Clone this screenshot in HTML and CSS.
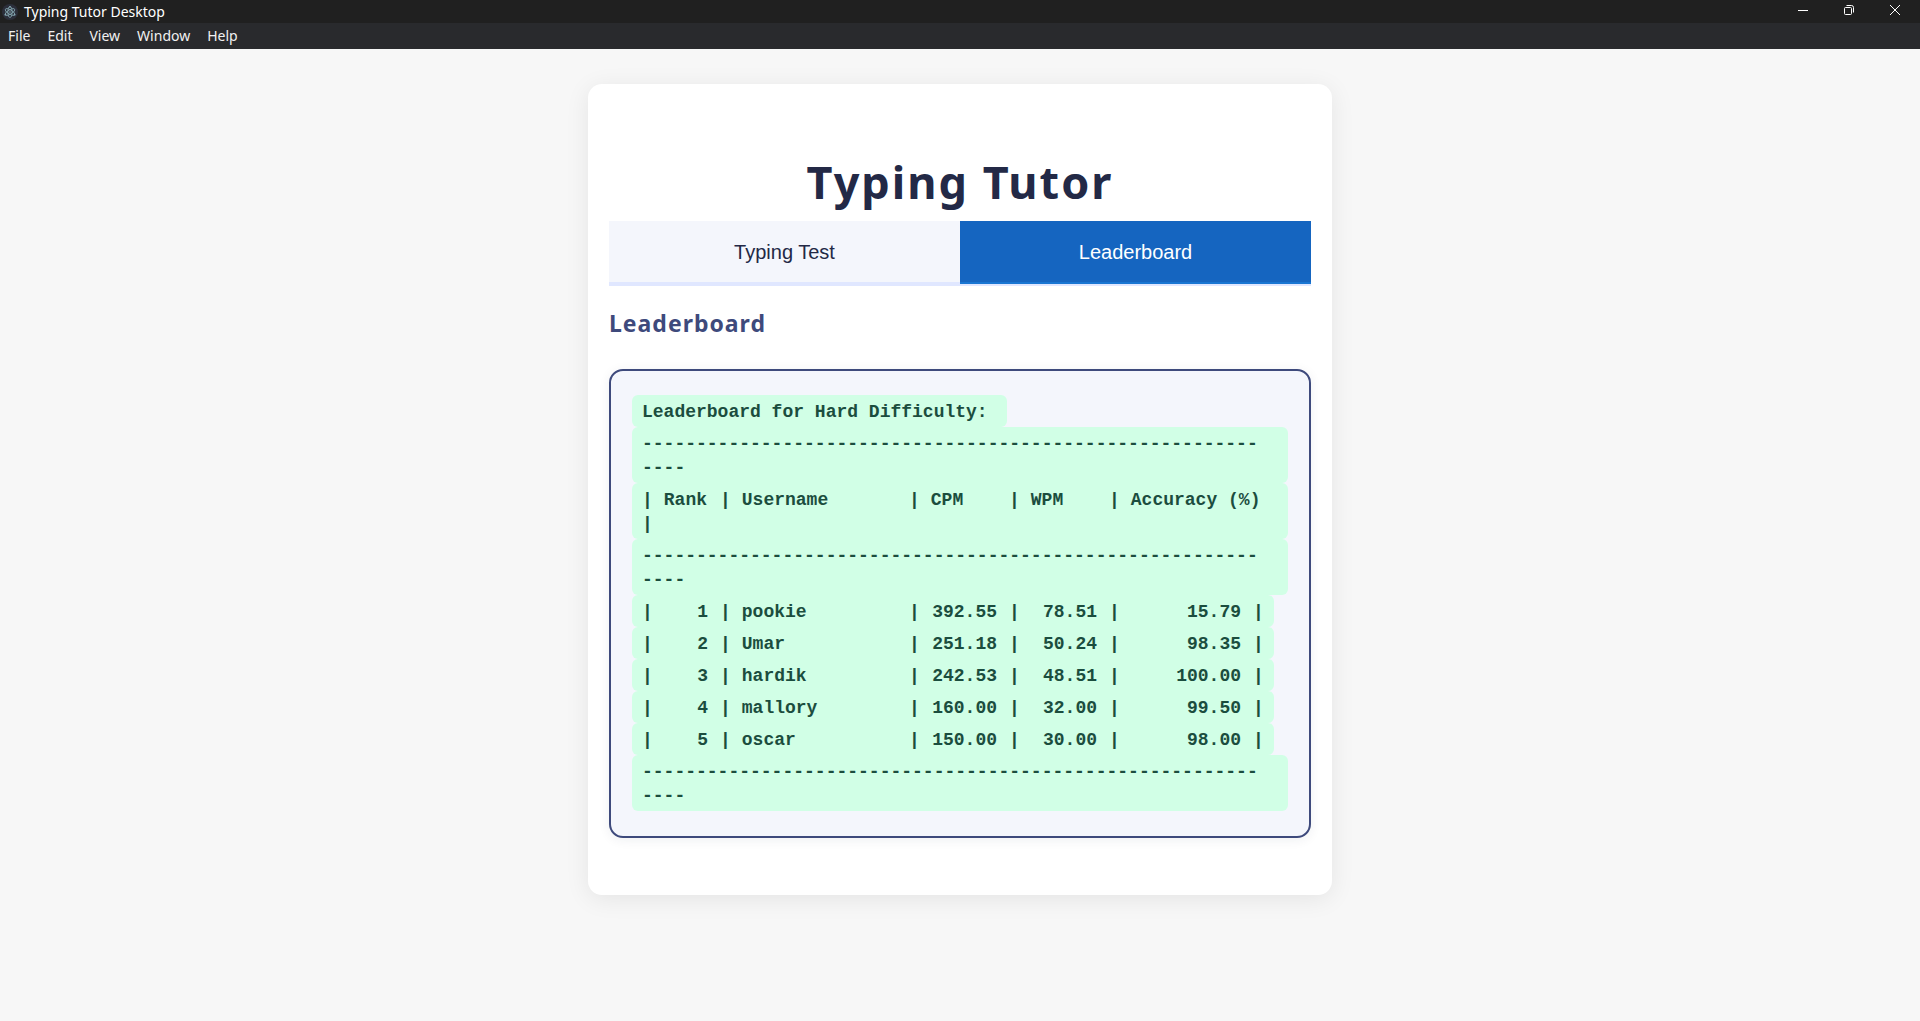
FILE: index.html
```html
<!DOCTYPE html>
<html lang="en">
<head>
<meta charset="utf-8">
<title>Typing Tutor Desktop</title>
<link rel="stylesheet" href="styles.css">
</head>
<body>
<header>
  <div class="titlebar">
    <svg class="app-icon" viewBox="0 0 16 16" aria-hidden="true">
      <circle cx="8" cy="8" r="8" fill="#2b2e3a"/>
      <g fill="none" stroke="#86a9b3" stroke-width="0.8">
        <ellipse cx="8" cy="8" rx="5.4" ry="2.1" transform="rotate(30 8 8)"/>
        <ellipse cx="8" cy="8" rx="5.4" ry="2.1" transform="rotate(90 8 8)"/>
        <ellipse cx="8" cy="8" rx="5.4" ry="2.1" transform="rotate(150 8 8)"/>
      </g>
      <g fill="#86a9b3">
        <circle cx="8" cy="8" r="0.8"/>
        <circle cx="3.4" cy="10.7" r="0.9"/>
        <circle cx="12.6" cy="10.7" r="0.9"/>
        <circle cx="8" cy="2.8" r="0.9"/>
      </g>
    </svg>
    <span class="app-title">Typing Tutor Desktop</span>
    <div class="window-controls">
      <button type="button" aria-label="Minimize"><svg viewBox="0 0 10 10"><path d="M0 5.5h10"/></svg></button>
      <button type="button" aria-label="Restore"><svg viewBox="0 0 10 10"><rect x="0.5" y="2.5" width="7" height="7" rx="1"/><path d="M2.5 .5H7.500a2 2 0 0 1 2 2V7.500"/></svg></button>
      <button type="button" aria-label="Close"><svg viewBox="0 0 10 10"><path d="M0 0l10 10M10 0L0 10"/></svg></button>
    </div>
  </div>
  <nav class="menubar" aria-label="Application menu">
    <button type="button">File</button>
    <button type="button">Edit</button>
    <button type="button">View</button>
    <button type="button">Window</button>
    <button type="button">Help</button>
  </nav>
</header>
<main class="card">
  <h1>Typing Tutor</h1>
  <div class="tabs" role="tablist">
    <button type="button" class="tab" role="tab" aria-selected="false">Typing Test</button>
    <button type="button" class="tab active" role="tab" aria-selected="true">Leaderboard</button>
  </div>
  <h2>Leaderboard</h2>
  <section class="panel">
    <table class="board">
      <caption>Leaderboard for Hard Difficulty:</caption>
      <thead>
        <tr class="rule"><td colspan="6">-------------------------------------------------------------</td></tr>
        <tr class="head">
          <th><i>|</i><span>Rank</span></th>
          <th><i>|</i><span>Username</span></th>
          <th><i>|</i><span>CPM</span></th>
          <th><i>|</i><span>WPM</span></th>
          <th><i>|</i><span>Accuracy (%)</span></th>
          <th><i>|</i></th>
        </tr>
        <tr class="rule"><td colspan="6">-------------------------------------------------------------</td></tr>
      </thead>
      <tbody>
        <tr class="entry"><td class="num"><i>|</i><span>1</span></td><td><i>|</i><span>pookie</span></td><td class="num"><i>|</i><span>392.55</span></td><td class="num"><i>|</i><span>78.51</span></td><td class="num"><i>|</i><span>15.79</span></td><td><i>|</i></td></tr>
        <tr class="entry"><td class="num"><i>|</i><span>2</span></td><td><i>|</i><span>Umar</span></td><td class="num"><i>|</i><span>251.18</span></td><td class="num"><i>|</i><span>50.24</span></td><td class="num"><i>|</i><span>98.35</span></td><td><i>|</i></td></tr>
        <tr class="entry"><td class="num"><i>|</i><span>3</span></td><td><i>|</i><span>hardik</span></td><td class="num"><i>|</i><span>242.53</span></td><td class="num"><i>|</i><span>48.51</span></td><td class="num"><i>|</i><span>100.00</span></td><td><i>|</i></td></tr>
        <tr class="entry"><td class="num"><i>|</i><span>4</span></td><td><i>|</i><span>mallory</span></td><td class="num"><i>|</i><span>160.00</span></td><td class="num"><i>|</i><span>32.00</span></td><td class="num"><i>|</i><span>99.50</span></td><td><i>|</i></td></tr>
        <tr class="entry"><td class="num"><i>|</i><span>5</span></td><td><i>|</i><span>oscar</span></td><td class="num"><i>|</i><span>150.00</span></td><td class="num"><i>|</i><span>30.00</span></td><td class="num"><i>|</i><span>98.00</span></td><td><i>|</i></td></tr>
        <tr class="rule"><td colspan="6">-------------------------------------------------------------</td></tr>
      </tbody>
    </table>
  </section>
</main>
</body>
</html>
```
FILE: styles.css
```css
* { box-sizing: border-box; }

body {
  margin: 0;
  background: #f7f7f7;
  font-family: "Noto Sans", "Open Sans", sans-serif;
  color: #232946;
}

button {
  margin: 0;
  padding: 0;
  border: 0;
  background: none;
  font: inherit;
  color: inherit;
}

.titlebar {
  display: flex;
  align-items: center;
  gap: 6px;
  height: 23px;
  padding-left: 2px;
  background: #202020;
  color: #fff;
  font-size: 14px;
}

.app-icon { width: 16px; height: 16px; }

.window-controls {
  display: flex;
  align-self: stretch;
  margin-left: auto;
}

.window-controls button {
  display: flex;
  justify-content: center;
  width: 46px;
  padding-top: 5px;
}

.window-controls svg {
  width: 10px;
  height: 10px;
  fill: none;
  stroke: #fff;
  stroke-width: 1;
}

.titlebar { padding-right: 2px; }

.menubar {
  display: flex;
  gap: 17px;
  height: 26px;
  padding: 0 8px 2px;
  background: #292a2d;
  color: #f1f1f1;
  font-size: 14px;
}

.card {
  max-width: 744px;
  margin: 35px auto;
  padding: 58px 21px 57px;
  border-radius: 14px;
  background: #fff;
  box-shadow: 0 4px 24px rgba(0, 0, 0, 0.08);
}

h1 {
  margin: 0;
  font-size: 45px;
  font-weight: 700;
  line-height: 79px;
  letter-spacing: 2px;
  text-align: center;
}

.tabs {
  display: flex;
  border-bottom: 2px solid #e0e7ff;
}

.tab {
  flex: 1;
  padding: 19px 8px 18px;
  border-bottom: 2px solid #e0e7ff;
  background: #f4f6fc;
  font-family: "Liberation Sans", Arial, sans-serif;
  font-size: 20px;
  line-height: 24px;
}

.tab.active {
  border-bottom-color: #1976d2;
  background: #1565c0;
  color: #fff;
}

h2 {
  margin: 21px 0 30px;
  color: #3e4a7c;
  font-size: 23px;
  font-weight: 700;
  line-height: 32px;
  letter-spacing: 1px;
}

.panel {
  padding: 24px 21px 25px;
  border: 2px solid #3e4a7c;
  border-radius: 14px;
  background: #f4f6fc;
  box-shadow: 0 2px 12px rgba(35, 41, 70, 0.07);
}

.board,
.board thead,
.board tbody {
  display: block;
}

.board {
  color: #1b4d3e;
  font-family: "Liberation Mono", "DejaVu Sans Mono", monospace;
  font-size: 18px;
  font-weight: 700;
  line-height: 24px;
}

.board caption,
.board tr {
  width: fit-content;
  padding: 5px 10px 3px;
  border-radius: 6px;
  background: #d1ffe6;
}

.board caption {
  display: block;
  min-width: 375px;
  text-align: left;
}

.board tr.rule,
.board tr.head {
  width: auto;
}

.board .rule { display: block; }

.board .rule td {
  display: block;
  max-width: 57ch;
  word-break: break-all;
}

.board .head,
.board .entry {
  display: grid;
  grid-template-columns: 78px 189px 100px 100px 144px;
}

.board .entry { grid-template-columns: 78px 189px 100px 100px 144px 11px; }

.board th,
.board td {
  padding: 0;
  text-align: left;
}

.board .head th,
.board .entry td {
  display: flex;
  gap: 11px;
  white-space: nowrap;
}

.board .entry .num {
  justify-content: space-between;
  padding-right: 12px;
}

.board i { font-style: normal; }
```
